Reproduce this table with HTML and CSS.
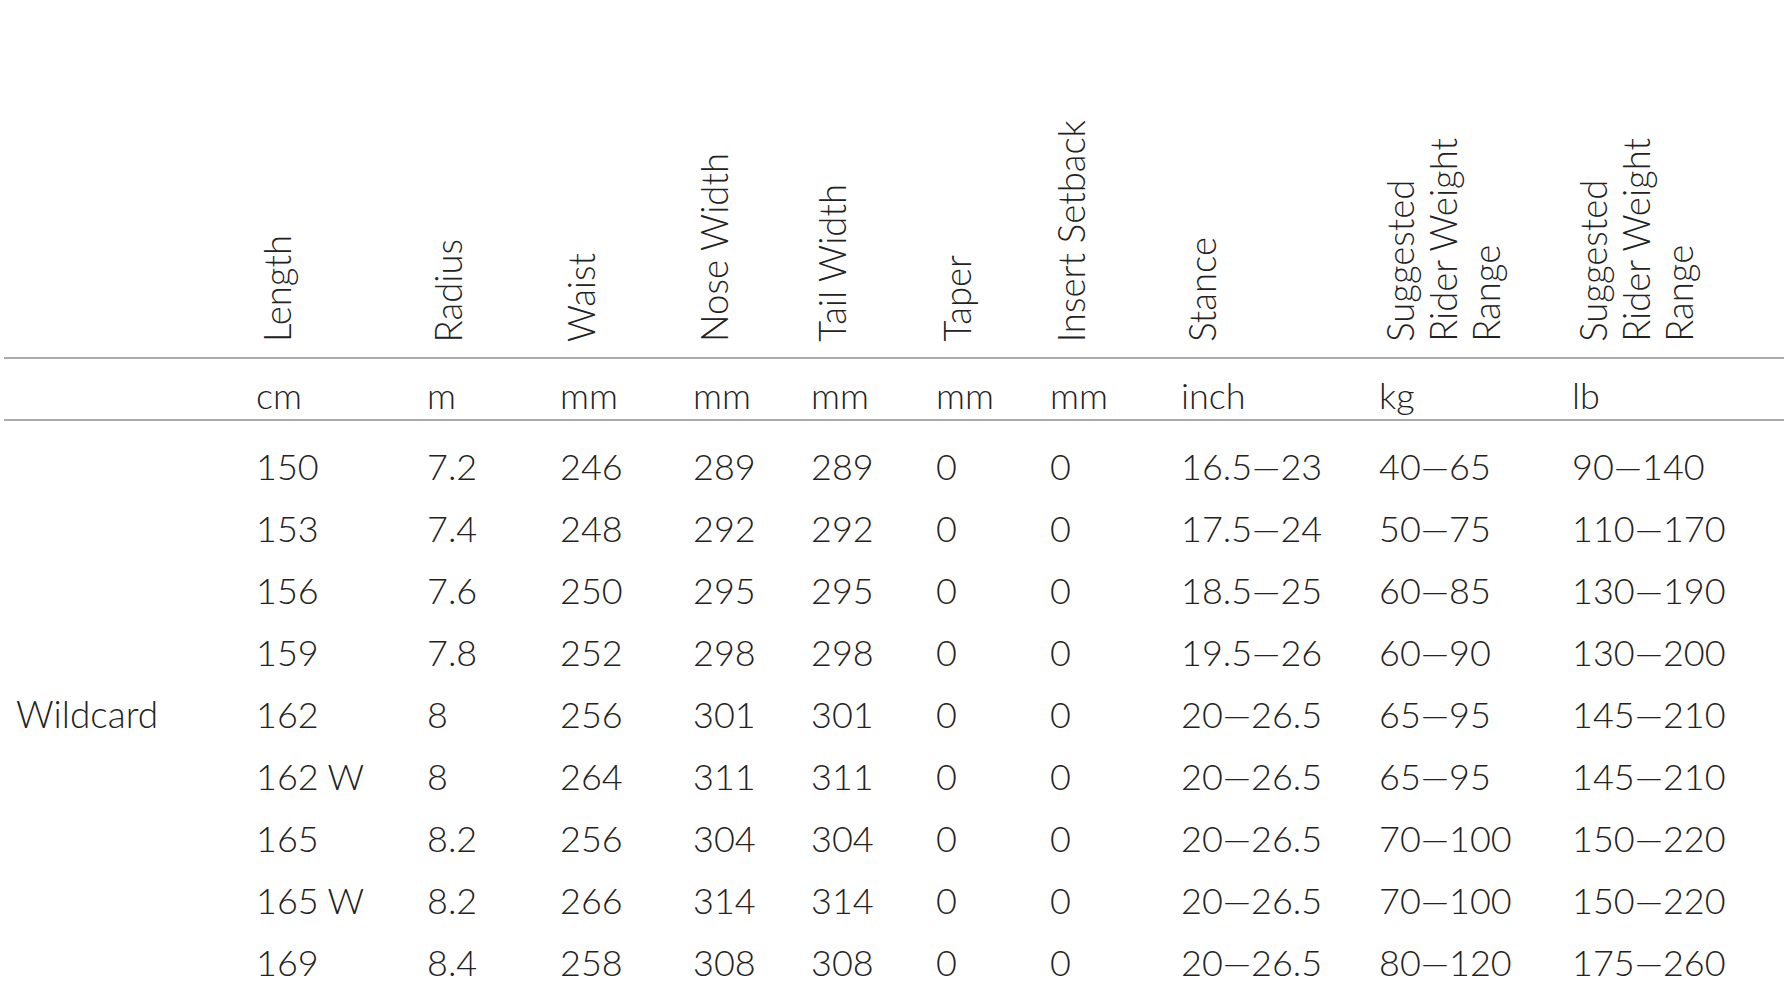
FILE: index.html
```html
<!DOCTYPE html>
<html lang="en">
<head>
<meta charset="utf-8">
<title>Wildcard specifications</title>
<link rel="stylesheet" href="styles.css">
</head>
<body>
<table class="spec">
  <colgroup>
    <col class="c-model">
    <col class="c-length">
    <col class="c-radius">
    <col class="c-waist">
    <col class="c-nose">
    <col class="c-tail">
    <col class="c-taper">
    <col class="c-insert">
    <col class="c-stance">
    <col class="c-kg">
    <col class="c-lb">
  </colgroup>
  <thead>
    <tr class="names">
      <th></th>
      <th><div class="vlabel">Length</div></th>
      <th><div class="vlabel">Radius</div></th>
      <th><div class="vlabel">Waist</div></th>
      <th><div class="vlabel">Nose Width</div></th>
      <th><div class="vlabel">Tail Width</div></th>
      <th><div class="vlabel">Taper</div></th>
      <th><div class="vlabel">Insert Setback</div></th>
      <th><div class="vlabel">Stance</div></th>
      <th><div class="vlabel">Suggested<br>Rider Weight<br>Range</div></th>
      <th><div class="vlabel">Suggested<br>Rider Weight<br>Range</div></th>
    </tr>
    <tr class="units">
      <td></td>
      <td>cm</td>
      <td>m</td>
      <td>mm</td>
      <td>mm</td>
      <td>mm</td>
      <td>mm</td>
      <td>mm</td>
      <td>inch</td>
      <td>kg</td>
      <td>lb</td>
    </tr>
  </thead>
  <tbody>
    <tr class="data">
      <td class="model" rowspan="9">Wildcard</td>
      <td>150</td><td>7.2</td><td>246</td><td>289</td><td>289</td><td>0</td><td>0</td><td>16.5—23</td><td>40—65</td><td>90—140</td>
    </tr>
    <tr class="data">
      <td>153</td><td>7.4</td><td>248</td><td>292</td><td>292</td><td>0</td><td>0</td><td>17.5—24</td><td>50—75</td><td>110—170</td>
    </tr>
    <tr class="data">
      <td>156</td><td>7.6</td><td>250</td><td>295</td><td>295</td><td>0</td><td>0</td><td>18.5—25</td><td>60—85</td><td>130—190</td>
    </tr>
    <tr class="data">
      <td>159</td><td>7.8</td><td>252</td><td>298</td><td>298</td><td>0</td><td>0</td><td>19.5—26</td><td>60—90</td><td>130—200</td>
    </tr>
    <tr class="data">
      <td>162</td><td>8</td><td>256</td><td>301</td><td>301</td><td>0</td><td>0</td><td>20—26.5</td><td>65—95</td><td>145—210</td>
    </tr>
    <tr class="data">
      <td>162 W</td><td>8</td><td>264</td><td>311</td><td>311</td><td>0</td><td>0</td><td>20—26.5</td><td>65—95</td><td>145—210</td>
    </tr>
    <tr class="data">
      <td>165</td><td>8.2</td><td>256</td><td>304</td><td>304</td><td>0</td><td>0</td><td>20—26.5</td><td>70—100</td><td>150—220</td>
    </tr>
    <tr class="data">
      <td>165 W</td><td>8.2</td><td>266</td><td>314</td><td>314</td><td>0</td><td>0</td><td>20—26.5</td><td>70—100</td><td>150—220</td>
    </tr>
    <tr class="data">
      <td>169</td><td>8.4</td><td>258</td><td>308</td><td>308</td><td>0</td><td>0</td><td>20—26.5</td><td>80—120</td><td>175—260</td>
    </tr>
  </tbody>
</table>
</body>
</html>
```
FILE: styles.css
```css
html, body {
  margin: 0;
  background: #ffffff;
}

body {
  font-family: Lato, "Liberation Sans", sans-serif;
  font-weight: 300;
  color: #222222;
  overflow: hidden;
}

.spec {
  margin: 100px 0 0 4px;
  width: 1780px;
  table-layout: fixed;
  border-collapse: separate;
  border-spacing: 0;
  font-size: 36px;
}

.c-model { width: 240px; }
.c-length { width: 171px; }
.c-radius { width: 133px; }
.c-waist { width: 133px; }
.c-nose { width: 118px; }
.c-tail { width: 125px; }
.c-taper { width: 114px; }
.c-insert { width: 131px; }
.c-stance { width: 198px; }
.c-kg { width: 193px; }
.c-lb { width: 224px; }

.spec th,
.spec td {
  padding: 0 0 0 12px;
  text-align: left;
  font-weight: 300;
  white-space: nowrap;
}

.names {
  height: 259px;
}

.names th {
  vertical-align: bottom;
  padding-bottom: 15px;
  border-bottom: 2px solid #ababab;
}

.vlabel {
  display: block;
  width: max-content;
  writing-mode: vertical-rl;
  transform: rotate(180deg);
  line-height: 43px;
  font-size: 36.5px;
}

.units td {
  padding-top: 15px;
  padding-bottom: 3px;
  line-height: 42px;
  border-bottom: 2px solid #ababab;
}

.data td {
  padding-top: 10px;
  padding-bottom: 10px;
  line-height: 42px;
  vertical-align: top;
}

.data:first-child td {
  padding-top: 24px;
}

.spec .model {
  vertical-align: middle;
  padding-left: 12px;
  padding-bottom: 10px;
  font-size: 37px;
}
```
